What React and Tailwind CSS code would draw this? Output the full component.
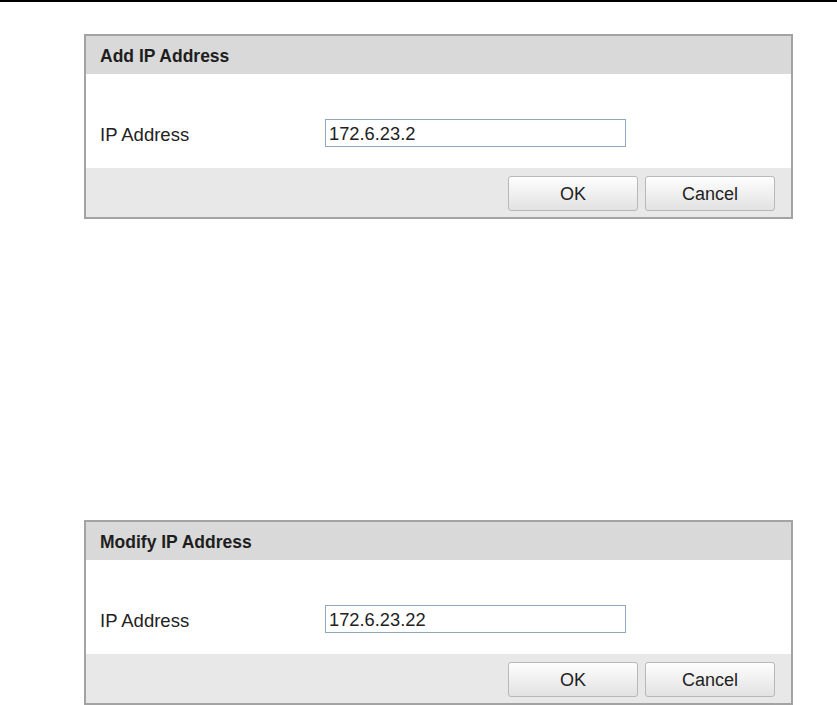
import React from "react";

function Dialog({ title, value, className }) {
  return (
    <div className={"ml-[84px] w-[709px] border-2 border-[#a3a3a3] " + className}>
      <div className="h-[38px] bg-[#d9d9d9] pl-[14px] pt-[3px] flex items-center text-[17.5px] font-bold text-[#1e1e1e]">
        {title}
      </div>
      <div className="h-[94px] bg-white pt-[45px]">
        <div className="flex items-center h-[28px]">
          <div className="w-[239px] pl-[14px] pt-[3px] text-[18.5px] text-[#222]">IP Address</div>
          <div className="w-[301px] h-[28px] border border-[#8fa8c0] bg-white flex items-center pl-[3px] pt-[2px] text-[18.3px] text-[#222]">
            {value}
          </div>
        </div>
      </div>
      <div className="h-[49px] bg-[#e8e8e8] flex justify-end gap-[7px] pt-[8px] pr-[16px]">
        <button className="w-[130px] h-[35px] pt-[2px] rounded-[3px] border border-[#b8b8b8] bg-gradient-to-b from-[#fefefe] to-[#e2e2e2] text-[18px] text-[#222]">
          OK
        </button>
        <button className="w-[130px] h-[35px] pt-[2px] rounded-[3px] border border-[#b8b8b8] bg-gradient-to-b from-[#fefefe] to-[#e2e2e2] text-[18px] text-[#222]">
          Cancel
        </button>
      </div>
    </div>
  );
}

export default function App() {
  return (
    <div className="w-[837px] h-[705px] bg-white overflow-hidden" style={{ fontFamily: '"Liberation Sans", Arial, sans-serif' }}>
      <div className="h-[2px] bg-black" />
      <Dialog title="Add IP Address" value="172.6.23.2" className="mt-[32px]" />
      <Dialog title="Modify IP Address" value="172.6.23.22" className="mt-[301px]" />
    </div>
  );
}
